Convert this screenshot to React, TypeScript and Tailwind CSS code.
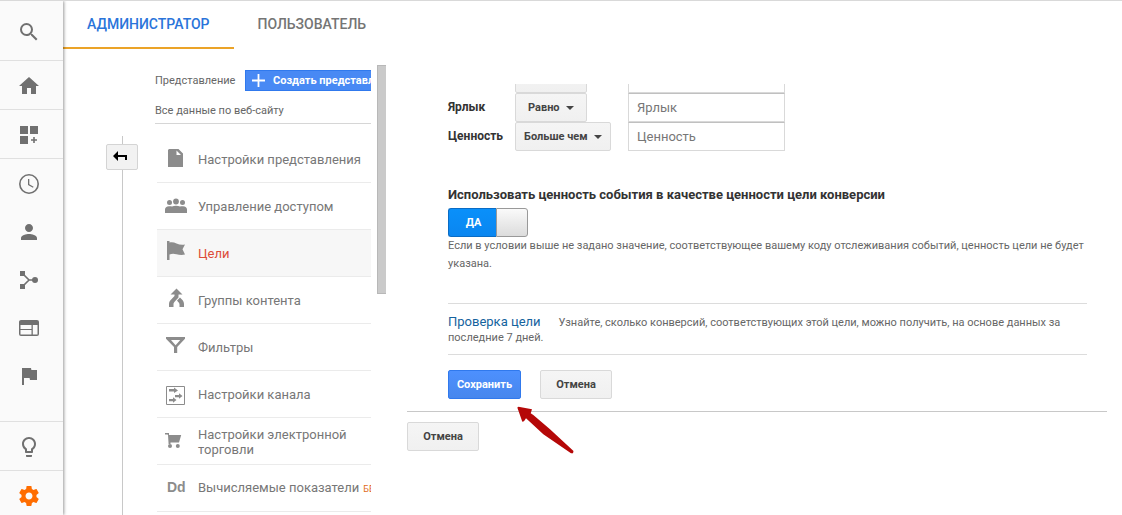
import React, { useState } from "react";

type IconProps = { className?: string };

function Glyph({ d, className = "size-6" }: { d: string; className?: string }) {
  return (
    <svg viewBox="0 0 24 24" fill="currentColor" className={className} aria-hidden="true">
      <path d={d} />
    </svg>
  );
}

const paths = {
  search:
    "M15.5 14h-.79l-.28-.27A6.47 6.47 0 0 0 16 9.5 6.5 6.5 0 1 0 9.5 16c1.61 0 3.09-.59 4.23-1.57l.27.28v.79l5 4.99L20.49 19l-4.99-5zm-6 0C7.01 14 5 11.99 5 9.5S7.01 5 9.5 5 14 7.01 14 9.5 11.99 14 9.5 14z",
  home: "M10 20v-6h4v6h5v-8h3L12 3 2 12h3v8z",
  dashboard: "M3 3h8v8H3zM13 3h8v8h-8zM3 13h8v8H3zM16.2 14h1.600v2.200H20v1.600h-2.200V20h-1.600v-2.200H14v-1.600h2.200z",
  clock:
    "M12 2a10 10 0 1 0 0 20 10 10 0 0 0 0-20zM12 20.400A8.400 8.400 0 1 1 12 3.600a8.400 8.400 0 0 1 0 16.800zM12.300 7H11v6l5 2.800.6-1.100-4.300-2.400z",
  person:
    "M12 12c2.210 0 4-1.790 4-4s-1.790-4-4-4-4 1.790-4 4 1.790 4 4 4zm0 2c-2.670 0-8 1.340-8 4v2h16v-2c0-2.660-5.330-4-8-4z",
  flag: "M14.400 6 14 4H5v17h2v-7h5.600l.4 2h7V6z",
  bulb: "M9 21c0 .55.45 1 1 1h4c.55 0 1-.45 1-1v-1H9v1zm3-19C8.140 2 5 5.140 5 9c0 2.380 1.190 4.470 3 5.740V17c0 .55.45 1 1 1h6c.55 0 1-.45 1-1v-2.260c1.810-1.270 3-3.360 3-5.740 0-3.860-3.140-7-7-7zm2.850 11.100-.85.6V16h-4v-2.300l-.85-.6A4.997 4.997 0 0 1 7 9c0-2.760 2.240-5 5-5s5 2.240 5 5c0 1.630-.8 3.160-2.150 4.100z",
  gear: "M19.430 12.980c.04-.32.07-.64.07-.98s-.03-.66-.07-.98l2.110-1.650c.19-.15.24-.42.12-.64l-2-3.460c-.12-.22-.39-.3-.61-.22l-2.490 1c-.52-.4-1.080-.73-1.690-.98l-.38-2.650C14.460 2.180 14.250 2 14 2h-4c-.25 0-.46.18-.49.42l-.38 2.650c-.61.25-1.170.59-1.690.98l-2.490-1c-.23-.09-.49 0-.61.22l-2 3.460c-.13.22-.07.49.12.64l2.110 1.650c-.04.32-.07.65-.07.98s.03.66.07.98l-2.110 1.650c-.19.15-.24.42-.12.64l2 3.460c.12.22.39.3.61.22l2.490-1c.52.4 1.080.73 1.690.98l.38 2.650c.03.24.24.42.49.42h4c.25 0 .46-.18.49-.42l.38-2.650c.61-.25 1.170-.59 1.690-.98l2.490 1c.23.09.49 0 .61-.22l2-3.460c.12-.22.07-.49-.12-.64l-2.110-1.650zM12 15.500c-1.930 0-3.500-1.570-3.500-3.500s1.570-3.500 3.500-3.500 3.500 1.570 3.500 3.500-1.570 3.500-3.500 3.500z",
};

function FlowIcon() {
  return (
    <svg viewBox="0 0 24 24" className="size-6" fill="currentColor" aria-hidden="true">
      <path d="M3 3h5v5H3zM3 16h5v5H3z" />
      <circle cx="18" cy="12" r="3" />
      <path d="M6 6l6 6-6 6M12 12h6" fill="none" stroke="currentColor" strokeWidth="1.6" />
    </svg>
  );
}

function BehaviorIcon() {
  return (
    <svg viewBox="0 0 24 24" className="size-6" fill="currentColor" aria-hidden="true">
      <path
        fillRule="evenodd"
        d="M4 4h16a2 2 0 0 1 2 2v12a2 2 0 0 1-2 2H4a2 2 0 0 1-2-2V6c0-1.100.9-2 2-2zM3.500 9v4h11V9zM3.500 14v4.500h11V14zM15.800 9v9.500h4.700V9z"
      />
    </svg>
  );
}

function MenuIcon({ children }: { children: React.ReactNode }) {
  return (
    <svg viewBox="0 0 22 24" className="h-6 w-[22px]" fill="currentColor" aria-hidden="true">
      {children}
    </svg>
  );
}

const docIcon = (
  <MenuIcon>
    <path fillRule="evenodd" d="M4 3h9.500L18 7.500V21H3V4zM11.500 4.500V9H16z" />
  </MenuIcon>
);

const peopleIcon = (
  <MenuIcon>
    <circle cx="4.500" cy="9.500" r="2.500" />
    <circle cx="11" cy="8.500" r="2.900" />
    <circle cx="17.500" cy="9.500" r="2.500" />
    <path d="M0 20v-3.500c0-2 1.500-3 4-3.300 1.300-.1 2 0 3 .2 1.200-.5 2.400-.7 4-.7s2.800.2 4 .7c1-.2 1.700-.3 3-.2 2.500.3 4 1.300 4 3.300V20z" />
  </MenuIcon>
);

const wavingFlagIcon = (
  <MenuIcon>
    <path d="M2 1h2.500v1.500c2.500-.6 4.500-.2 7 .9 2.800 1.200 5.500 1.600 8.500 1l-2.500 4.800L20 14.500c-3 .8-6 .4-8.500-.3-2.500-.6-4.500-.8-7 .3V20H2z" />
  </MenuIcon>
);

const mergeIcon = (
  <MenuIcon>
    <path d="M11.500 1.500 17.500 7.500h-4v3L9.800 14.500c-.9 1-1.300 1.700-1.300 3V20H4v-3c0-2 .8-3.200 2.200-4.600L9.500 9V7.500h-4zM12 13.500l3-3 1.700 1.700C18.200 13.700 19 15 19 17v3h-4.500v-2.200c0-1.300-.5-1.900-1.300-2.700z" />
  </MenuIcon>
);

const funnelIcon = (
  <MenuIcon>
    <path fillRule="evenodd" d="M1 3h19v1.700L12.200 13v6H9V13L1 4.700zM6 6l4.600 5.300L15.200 6z" />
  </MenuIcon>
);

const channelIcon = (
  <MenuIcon>
    <path d="M1.500 5.500h18v18h-18z" fill="none" stroke="currentColor" />
    <path d="M4 8h5V6.500L13 9.500 9 12v-1.500H4zM10 13.900h4v-1.700l3.500 2.800-3.500 2.800V16.200h-4zM4 17.900h4v-1.700l3.500 2.800L8 21.800V20.200H4z" />
  </MenuIcon>
);

const cartIcon = (
  <MenuIcon>
    <path d="M0 5h4v2h12.200L14 14.500H5.500V16H3.600L3 7 2.500 6.600H0z" />
    <circle cx="5" cy="18" r="2" />
    <circle cx="12.800" cy="18" r="2" />
  </MenuIcon>
);

function Caret({ className }: IconProps) {
  return (
    <svg viewBox="0 0 8 4" className={className} fill="#444" aria-hidden="true">
      <path d="M0 0h8L4 4z" />
    </svg>
  );
}

const grayButton =
  "h-[29px] rounded-[2px] border border-[#d9d9d9] bg-linear-to-b from-[#f5f5f5] to-[#f0f0f0] text-[11px] font-bold text-[#444]";

const fieldClass =
  "block h-[29px] w-[157px] border border-[#d9d9d9] border-t-[#c0c0c0] bg-white px-2 text-[13px] text-[#444] placeholder:text-[#777]";

function FieldRow({ id, label, value, wide }: { id: string; label: string; value: string; wide?: boolean }) {
  return (
    <div className="flex h-[29px]">
      <label htmlFor={id} className="w-[67px] pt-[6px] text-xs leading-4 font-bold text-[#333]">
        {label}
      </label>
      <div className="w-[113px]">
        <span className="relative block">
          <select
            aria-label={`${label}: условие`}
            className={`${grayButton} block appearance-none pt-[2px] ${wide ? "w-24 pl-2" : "w-[72px] pl-3"}`}
          >
            <option>{value}</option>
          </select>
          <Caret
            className={`pointer-events-none absolute top-[13px] h-1 w-2 ${wide ? "left-[79px]" : "left-[51px]"}`}
          />
        </span>
      </div>
      <input id={id} placeholder={label} className={fieldClass} />
    </div>
  );
}

const railButton = "flex h-12 w-full shrink-0 items-center pt-px pl-[17px]";

const menu: { label: string; icon: React.ReactNode; active?: boolean; beta?: boolean }[] = [
  { label: "Настройки представления", icon: docIcon },
  { label: "Управление доступом", icon: peopleIcon },
  { label: "Цели", icon: wavingFlagIcon, active: true },
  { label: "Группы контента", icon: mergeIcon },
  { label: "Фильтры", icon: funnelIcon },
  { label: "Настройки канала", icon: channelIcon },
  { label: "Настройки электронной торговли", icon: cartIcon },
  {
    label: "Вычисляемые показатели",
    icon: <span className="pl-[2px] font-['Liberation_Sans'] text-sm leading-5 font-bold">Dd</span>,
    beta: true,
  },
];

function Rail() {
  return (
    <nav
      aria-label="Разделы"
      className="z-10 w-[63px] shrink-0 bg-[#fafafa] text-[#707070] shadow-[1px_0_3px_rgba(0,0,0,0.4)]"
    >
      <button aria-label="Поиск" className="flex h-[60px] w-full items-center border-b border-[#e0e0e0] pt-[2px] pl-[17px]">
        <Glyph d={paths.search} />
      </button>
      <div className="border-b border-[#e0e0e0]">
        <button aria-label="Главная" className={railButton}><Glyph d={paths.home} /></button>
      </div>
      <div className="border-b border-[#e0e0e0]">
        <button aria-label="Сводки" className={railButton}><Glyph d={paths.dashboard} /></button>
      </div>
      <div className="border-b border-[#e0e0e0] pb-[22px]">
        <button aria-label="В реальном времени" className={railButton}><Glyph d={paths.clock} /></button>
        <button aria-label="Аудитория" className={railButton}><Glyph d={paths.person} /></button>
        <button aria-label="Источники трафика" className={railButton}><FlowIcon /></button>
        <button aria-label="Поведение" className={railButton}><BehaviorIcon /></button>
        <button aria-label="Конверсии" className={railButton}><Glyph d={paths.flag} /></button>
      </div>
      <div className="border-b border-[#e0e0e0]">
        <button aria-label="Советы" className={railButton}><Glyph d={paths.bulb} /></button>
      </div>
      <button aria-label="Администратор" className={`${railButton} text-[#ff6d00]`}><Glyph d={paths.gear} /></button>
    </nav>
  );
}

function ViewColumn() {
  return (
    <section className="w-[216px] shrink-0 overflow-hidden pt-[21px] text-[11px] text-[#666]">
      <div className="flex h-[21px] items-center gap-[9px] whitespace-nowrap">
        <span className="w-[81px] shrink-0 pt-[2px]">Представление</span>
        <button className="flex h-[21px] shrink-0 items-center gap-2 border border-[#3079ed] bg-[#4889f4] px-[6px] font-bold text-white">
          <svg viewBox="0 0 13 13" className="size-[13px]" aria-hidden="true">
            <path d="M6.500 0v13M0 6.500h13" stroke="currentColor" strokeWidth="1.800" />
          </svg>
          <span className="pt-px">Создать представление</span>
        </button>
      </div>
      <div className="mt-3 border-b border-[#d6d6d6] pb-1 leading-4">Все данные по веб-сайту</div>
      <ul className="mt-3 ml-[2px] text-[13px] leading-[15px] text-[#777]">
        {menu.map((item) => (
          <li key={item.label} className={`border-b border-[#ebebeb] ${item.active ? "bg-[#f7f7f7]" : ""}`}>
            <a href="#" className="flex h-[46px] items-center">
              <span className="ml-2 flex w-[33px] shrink-0 pb-[2px] text-[#8c8c8c]">{item.icon}</span>
              <span className={item.beta ? "pt-px whitespace-nowrap" : "pt-px"}>
                <span className={item.active ? "text-[#dd4b39]" : ""}>{item.label}</span>
                {item.beta && <span className="ml-1 text-[9px] text-[#e06a1b]">БЕТА</span>}
              </span>
            </a>
          </li>
        ))}
      </ul>
    </section>
  );
}

function GoalForm() {
  const [useValue, setUseValue] = useState(true);
  return (
    <main className="mr-[15px] ml-[21px] min-w-0 flex-1 pt-[35px]">
      <form className="relative pr-5 pl-[41px]">
        <div className="flex h-[9px] items-end overflow-hidden pl-[67px]">
          <div className="w-[113px]">
            <div className={`${grayButton} w-[72px]`} />
          </div>
          <input aria-label="Действие" className={fieldClass} />
        </div>
        <FieldRow id="event-label" label="Ярлык" value="Равно" />
        <FieldRow id="event-value" label="Ценность" value="Больше чем" wide />

        <h2 className="mt-9 text-[13px] leading-4 font-bold text-[#333]">
          Использовать ценность события в качестве ценности цели конверсии
        </h2>
        <label className="mt-[5px] flex h-[29px] w-20 text-[11px] font-bold text-white">
          <input
            type="checkbox"
            className="sr-only"
            aria-label="Использовать ценность события"
            checked={useValue}
            onChange={(e) => setUseValue(e.target.checked)}
          />
          <span className="flex w-12 items-center justify-center rounded-l-[3px] border border-r-0 border-[#0a6cc4] bg-linear-to-b from-[#0a90fa] to-[#0a86f0] pt-px pl-[2px]">
            ДА
          </span>
          <span className="flex-1 rounded-r-[3px] border border-[#999] bg-linear-to-b from-[#fafafa] to-[#dcdcdc]" />
        </label>
        <p className="text-[11px] leading-[18px] text-[#666]">
          Если в условии выше не задано значение, соответствующее вашему коду отслеживания событий, ценность цели не
          будет указана.
        </p>

        <div className="mt-[30px] border-y border-[#dcdcdc] pt-[10px] pb-[9px] text-[11px] leading-[15px] text-[#666]">
          <a href="#" className="mr-[18px] text-[13px] text-[#15639e]">
            Проверка цели
          </a>
          Узнайте, сколько конверсий, соответствующих этой цели, можно получить, на основе данных за последние 7 дней.
        </div>

        <div className="mt-[15px] flex gap-[19px] pb-3">
          <button
            type="button"
            className="h-[29px] w-[73px] rounded-[2px] border border-[#3079ed] bg-linear-to-b from-[#4d90fe] to-[#4787ed] pt-px text-[11px] font-bold text-white"
          >
            Сохранить
          </button>
          <button type="button" className={`${grayButton} w-[72px] pt-px`}>
            Отмена
          </button>
        </div>
        <svg
          viewBox="0 0 58 48"
          className="absolute top-[322px] left-[109px] h-12 w-[58px]"
          fill="#b50808"
          aria-hidden="true"
        >
          <path d="M1.300 1.500 2.500.7 16 3.300 14.700 7.300 17.300 9 34 23.300 57.500 45 57 47.300 55 47.300 27.300 28.300 10 12.300 8 15.300 6.300 15.700z" />
        </svg>
      </form>
      <div className="border-t border-[#c8c8c8] pt-[10px]">
        <button type="button" className={`${grayButton} w-[72px] pt-px`}>
          Отмена
        </button>
      </div>
    </main>
  );
}

export default function App() {
  return (
    <div className="flex h-screen overflow-hidden border-t border-[#d9d9d9] bg-white font-[Roboto,sans-serif]">
      <Rail />
      <div className="flex min-w-0 flex-1 flex-col">
        <header className="flex h-12 shrink-0 text-sm font-medium">
          <a href="#" className="flex items-center border-b-2 border-[#eba328] px-6 text-[#2a74da]">
            АДМИНИСТРАТОР
          </a>
          <a href="#" className="flex items-center px-6 pb-[2px] text-[#757575]">
            ПОЛЬЗОВАТЕЛЬ
          </a>
        </header>
        <div className="flex min-h-0 flex-1">
          <div className="mt-[87px] mr-[17px] ml-[43px] flex w-8 shrink-0 flex-col">
            <span className="ml-4 h-2 w-px bg-[#c8c8c8]" />
            <button
              aria-label="Назад"
              className="flex h-[26px] items-center rounded-[2px] border border-[#d4d4d4] bg-[#f2f2f2] pb-[2px] pl-[6px] text-black"
            >
              <svg viewBox="0 0 14 10" className="h-[10px] w-[14px]" fill="currentColor" aria-hidden="true">
                <path d="M0 5 5 0v4h9v5h-2V6H5v4z" />
              </svg>
            </button>
            <span className="ml-4 w-px flex-1 bg-[#c8c8c8]" />
          </div>
          <ViewColumn />
          <div className="mt-4 ml-[6px] h-[229px] w-[9px] shrink-0 border border-r-0 border-[#b8b8b8] bg-[#cacaca]" />
          <GoalForm />
        </div>
      </div>
    </div>
  );
}
